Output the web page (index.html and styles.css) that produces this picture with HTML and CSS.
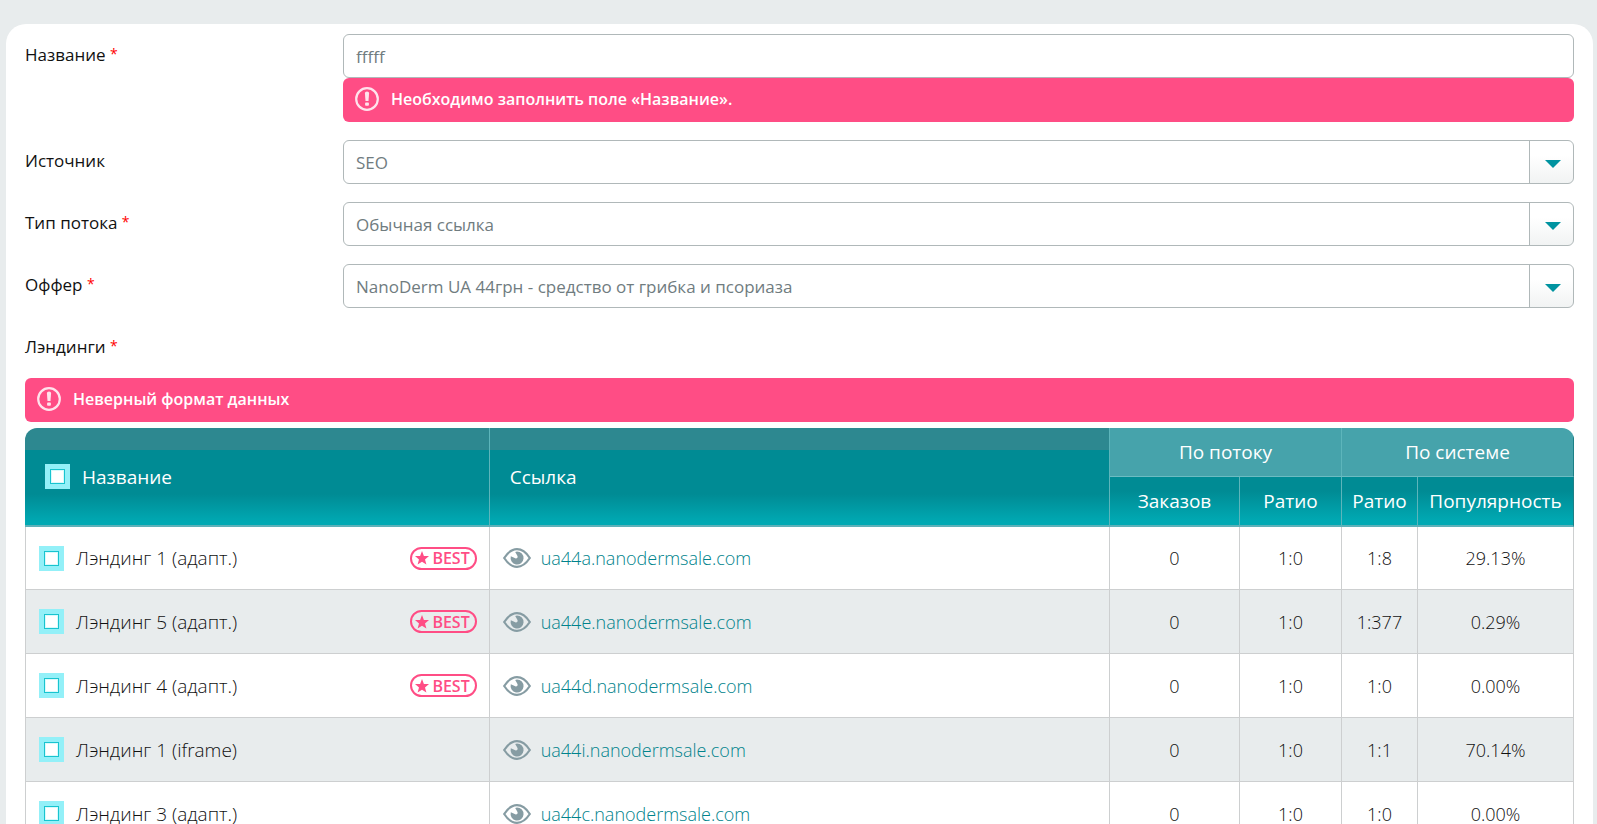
FILE: index.html
```html
<!DOCTYPE html>
<html lang="ru">
<head>
<meta charset="utf-8">
<title>Поток</title>
<link rel="stylesheet" href="styles.css">
</head>
<body>
<svg class="sprite" aria-hidden="true">
  <symbol id="alert" viewBox="0 0 24 24">
    <circle cx="12" cy="12" r="10.8" fill="none" stroke="#ffe3ec" stroke-width="2.200"/>
    <path d="M9.900 6a2.100 1.500 0 0 1 4.200 0l-.6 8h-3z" fill="#ffe3ec"/>
    <rect x="10.100" y="15.600" width="3.800" height="3.200" rx=".8" fill="#ffe3ec"/>
  </symbol>
  <symbol id="eye" viewBox="0 0 28 20">
    <path d="M1.200 10C5 4.200 9.300 1.200 14 1.200S23 4.200 26.800 10C23 15.800 18.700 18.800 14 18.800S5 15.800 1.200 10z" fill="none" stroke="#869ca3" stroke-width="2.200"/>
    <path d="M14 3.500a6.500 6.500 0 1 1-6.200 4.800l5 2.200a2 2 0 0 0 1.700-2.500l-2.300-4.100z" fill="#869ca3"/>
  </symbol>
  <symbol id="star" viewBox="0 0 14 14">
    <path d="M7 0l1.900 4.900 5.100.2-4 3.300 1.400 5.100L7 10.700l-4.400 2.800L4 8.400 0 5.100l5.100-.2z" fill="#ff4d85"/>
  </symbol>
</svg>
<main class="panel">
  <form class="form">
    <div class="row">
      <label class="label" for="name">Название <span class="required">*</span></label>
      <div>
        <input class="control" id="name" type="text" value="fffff">
        <p class="error"><svg class="error-icon"><use href="#alert"/></svg>Необходимо заполнить поле «Название».</p>
      </div>
    </div>
    <div class="row">
      <label class="label" for="source">Источник</label>
      <div class="select"><select class="control" id="source"><option>SEO</option></select></div>
    </div>
    <div class="row">
      <label class="label" for="type">Тип потока <span class="required">*</span></label>
      <div class="select"><select class="control" id="type"><option>Обычная ссылка</option></select></div>
    </div>
    <div class="row">
      <label class="label" for="offer">Оффер <span class="required">*</span></label>
      <div class="select"><select class="control" id="offer"><option>NanoDerm UA 44грн - средство от грибка и псориаза</option></select></div>
    </div>
    <section>
      <h2 class="label landings-title">Лэндинги <span class="required">*</span></h2>
      <p class="error"><svg class="error-icon"><use href="#alert"/></svg>Неверный формат данных</p>
      <table class="landings">
        <colgroup><col class="col-name"><col><col class="col-orders"><col class="col-ratio"><col class="col-system"><col class="col-popularity"></colgroup>
        <thead>
          <tr>
            <th class="tall" rowspan="2"><label class="pick"><input class="check" type="checkbox">Название</label></th>
            <th class="tall" rowspan="2">Ссылка</th>
            <th class="group" colspan="2">По потоку</th>
            <th class="group" colspan="2">По системе</th>
          </tr>
          <tr><th class="sub">Заказов</th><th class="sub">Ратио</th><th class="sub">Ратио</th><th class="sub">Популярность</th></tr>
        </thead>
        <tbody>
          <tr>
            <td><div class="name"><label class="pick"><input class="check" type="checkbox">Лэндинг 1 (адапт.)</label><span class="best"><svg class="star"><use href="#star"/></svg>BEST</span></div></td>
            <td><div class="site"><svg class="eye"><use href="#eye"/></svg><a class="link" href="#">ua44a.nanodermsale.com</a></div></td>
            <td class="num">0</td><td class="num">1:0</td><td class="num">1:8</td><td class="num">29.13%</td>
          </tr>
          <tr>
            <td><div class="name"><label class="pick"><input class="check" type="checkbox">Лэндинг 5 (адапт.)</label><span class="best"><svg class="star"><use href="#star"/></svg>BEST</span></div></td>
            <td><div class="site"><svg class="eye"><use href="#eye"/></svg><a class="link" href="#">ua44e.nanodermsale.com</a></div></td>
            <td class="num">0</td><td class="num">1:0</td><td class="num">1:377</td><td class="num">0.29%</td>
          </tr>
          <tr>
            <td><div class="name"><label class="pick"><input class="check" type="checkbox">Лэндинг 4 (адапт.)</label><span class="best"><svg class="star"><use href="#star"/></svg>BEST</span></div></td>
            <td><div class="site"><svg class="eye"><use href="#eye"/></svg><a class="link" href="#">ua44d.nanodermsale.com</a></div></td>
            <td class="num">0</td><td class="num">1:0</td><td class="num">1:0</td><td class="num">0.00%</td>
          </tr>
          <tr>
            <td><div class="name"><label class="pick"><input class="check" type="checkbox">Лэндинг 1 (iframe)</label></div></td>
            <td><div class="site"><svg class="eye"><use href="#eye"/></svg><a class="link" href="#">ua44i.nanodermsale.com</a></div></td>
            <td class="num">0</td><td class="num">1:0</td><td class="num">1:1</td><td class="num">70.14%</td>
          </tr>
          <tr>
            <td><div class="name"><label class="pick"><input class="check" type="checkbox">Лэндинг 3 (адапт.)</label></div></td>
            <td><div class="site"><svg class="eye"><use href="#eye"/></svg><a class="link" href="#">ua44c.nanodermsale.com</a></div></td>
            <td class="num">0</td><td class="num">1:0</td><td class="num">1:0</td><td class="num">0.00%</td>
          </tr>
        </tbody>
      </table>
    </section>
  </form>
</main>
</body>
</html>
```
FILE: styles.css
```css
* { box-sizing: border-box; }

body {
  margin: 0;
  height: 100vh;
  overflow: hidden;
  padding: 24px 4px 0 6px;
  background: #e8eced;
  color: #111;
  font-family: "Trebuchet MS", "Open Sans", sans-serif;
  font-size: 17px;
}

.sprite { display: none; }

.panel {
  padding: 10px 19px 24px;
  background: #fff;
  border-radius: 20px;
}

.form { display: flex; flex-direction: column; gap: 18px; }

.row { display: grid; grid-template-columns: 318px 1fr; }

.label { padding-top: 9px; line-height: 24px; }
.required { color: #f00; font-size: 14px; vertical-align: 2px; line-height: 16px; }

.control {
  display: block;
  width: 100%;
  height: 44px;
  padding: 0 12px;
  border: 1px solid #b0b8b9;
  border-radius: 6px;
  background: #fff;
  color: #707c7f;
  font: inherit;
  appearance: none;
}

.select { display: grid; align-items: center; }
.select .control {
  grid-area: 1 / 1;
  padding-right: 56px;
  background:
    linear-gradient(#b0b8b9, #b0b8b9) right 43px top / 1px 100% no-repeat,
    linear-gradient(#fff 35%, #f1f3f3) right top / 43px 100% no-repeat,
    #fff;
}
.select::after {
  content: "";
  grid-area: 1 / 1;
  justify-self: end;
  width: 16px;
  height: 8px;
  margin: 4px 13px 0 0;
  background: #0093a0;
  clip-path: polygon(0 0, 100% 0, 50% 100%);
  pointer-events: none;
}

.error {
  display: flex;
  align-items: center;
  gap: 12px;
  margin: 0;
  padding: 9px 12px 11px;
  border-radius: 6px;
  background: #ff4d85;
  color: #fff;
  font-size: 16px;
  font-weight: 600;
  line-height: 24px;
}
.error-icon { width: 24px; height: 24px; }

.landings-title { margin: 0 0 19px; font-size: 17px; font-weight: 400; }

.landings {
  width: 100%;
  margin-top: 6px;
  border-spacing: 0;
  border-radius: 12px 12px 0 0;
  overflow: hidden;
  table-layout: fixed;
  font-family: "Open Sans", sans-serif;
  font-size: 18px;
  line-height: 24px;
}
.col-name { width: 30%; }
.col-orders { width: 130px; }
.col-ratio { width: 102px; }
.col-system { width: 76px; }
.col-popularity { width: 156px; }

.landings th {
  height: 48px;
  padding: 0;
  border-right: 1px solid #5db5bb;
  color: #fff;
  font-size: 19px;
  font-weight: 400;
}
.landings th.tall {
  padding: 0 20px;
  border-bottom: 2px solid #5db1b9;
  background: linear-gradient(#2d8890 22px, #008b94 22px, #008b94 66px, #00a9b3 94px);
  text-align: left;
}
.landings th.group { height: 49px; border-bottom: 1px solid #6cbcc2; background: #46a3ab; }
.landings th.sub {
  height: 50px;
  border-bottom: 2px solid #5db1b9;
  background: linear-gradient(#008b94 14px, #00a9b3 44px);
}
.landings th:last-child { border-right-color: #1c7f86; }

.landings td {
  height: 64px;
  padding: 0;
  border-right: 1px solid #cdcfd0;
  border-bottom: 1px solid #cdcfd0;
  font-weight: 350;
}
.landings tbody tr:first-child td { height: 63px; }
.landings td:first-child { border-left: 1px solid #cdcfd0; }
.landings tr:nth-child(even) td { background: #e8eced; }
.num { text-align: center; }

.pick { display: flex; align-items: center; gap: 12px; }
.check {
  width: 25px;
  height: 25px;
  margin: 0;
  border: 5px solid #93f0f8;
  background: #fff;
  box-shadow: inset 0 0 0 1px #18c4cf, inset 0 0 0 2px #d8fafc;
  appearance: none;
}
.name {
  display: flex;
  align-items: center;
  justify-content: space-between;
  padding: 0 12px 0 13px;
  font-size: 19px;
}

.best {
  display: flex;
  align-items: center;
  gap: 3px;
  height: 23px;
  padding: 0 5px 0 3px;
  border: 2px solid #ff4d85;
  border-radius: 12px;
  color: #ff4d85;
  font-size: 16px;
  font-weight: 600;
}
.star { width: 14px; height: 14px; }

.site { display: flex; align-items: center; gap: 10px; padding-left: 13px; }
.eye { width: 28px; height: 20px; }
.link { color: #00838c; text-decoration: none; }
```
